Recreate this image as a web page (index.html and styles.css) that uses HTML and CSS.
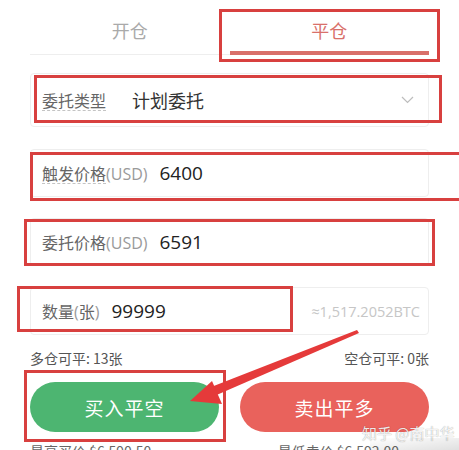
FILE: index.html
```html
<!DOCTYPE html>
<html lang="zh">
<head>
<meta charset="utf-8">
<link rel="stylesheet" href="styles.css">
</head>
<body>
<div class="page">
  <div class="tabs">
    <div class="tab">开仓</div>
    <div class="tab active">平仓</div>
  </div>

  <div class="field select">
    <span class="label dashed">委托类型</span>
    <span class="value sel-value">计划委托</span>
    <svg class="chevron" width="13" height="8" viewBox="0 0 13 8"><polyline points="1,1 6.5,6.5 12,1" fill="none" stroke="#bdbdbd" stroke-width="1.2"/></svg>
  </div>

  <div class="field input first">
    <span class="label"><span class="dashed">触发价格</span><span class="unit">(USD)</span></span>
    <span class="value">6400</span>
  </div>

  <div class="field input">
    <span class="label">委托价格<span class="unit">(USD)</span></span>
    <span class="value">6591</span>
  </div>

  <div class="field input">
    <span class="label">数量<span class="unit">(</span>张<span class="unit">)</span></span>
    <span class="value">99999</span>
    <span class="approx">≈1,517.2052BTC</span>
  </div>

  <div class="status">
    <span>多仓可平: 13张</span>
    <span>空仓可平: 0张</span>
  </div>

  <div class="buttons">
    <div class="btn buy">买入平空</div>
    <div class="btn sell">卖出平多</div>
  </div>

  <div class="bottom">
    <span>最高买价 $6,590.50</span>
    <span>最低卖价 $6,592.00</span>
  </div>
</div>

<div class="mark m-tab"></div>
<div class="mark m-select"></div>
<div class="mark m-trigger"></div>
<div class="mark m-entrust"></div>
<div class="mark m-qty"></div>
<div class="mark m-buy"></div>

<svg class="arrow" width="459" height="450" viewBox="0 0 459 450">
  <polygon points="357,330 359,333 212,397 206,389" fill="#e53a3a"/>
  <polygon points="190,401 212,381 222,404" fill="#e53a3a"/>
</svg>

<div class="watermark">知乎 @南中华</div>
<div class="shade"></div>
</body>
</html>
```

FILE: styles.css
```css
html, body {
  margin: 0;
  padding: 0;
  background: #fff;
  width: 459px;
  height: 450px;
  overflow: hidden;
}
body {
  position: relative;
  font-family: "Open Sans", "Noto Sans CJK SC", sans-serif;
  color: #333;
}
.page {
  width: 399px;
  padding: 0 0 0 30px;
}
.tabs {
  display: flex;
  height: 54px;
  border-bottom: 1px solid #eeeeee;
}
.tab {
  position: relative;
  flex: 1;
  display: flex;
  align-items: center;
  justify-content: center;
  padding-top: 6px;
  font-family: "Noto Sans CJK SC", sans-serif;
  font-size: 18px;
  color: #aaaaaa;
}
.tab.active {
  color: #d9706a;
}
.tab.active::after {
  content: "";
  position: absolute;
  left: 0;
  right: 0;
  bottom: -1px;
  height: 4px;
  background: #d9706a;
}
.field {
  display: flex;
  align-items: center;
  border: 1px solid #eeeeee;
  border-radius: 4px;
  padding: 0 8px 0 11px;
  box-sizing: border-box;
}
.select {
  margin-top: 18px;
  height: 54px;
}
.input {
  height: 48px;
  margin-top: 21px;
}
.input.first {
  margin-top: 22px;
}
.label {
  font-family: "Noto Sans CJK SC", sans-serif;
  font-size: 16px;
  color: #666;
  margin-right: 12px;
  white-space: nowrap;
}
.dashed {
  border-bottom: 1px dashed #c4c4c4;
  line-height: 20px;
  display: inline-block;
}
.unit {
  font-family: "Open Sans", sans-serif;
  font-size: 16px;
  color: #9a9a9a;
}
.value {
  font-family: "Open Sans", "Noto Sans CJK SC", sans-serif;
  font-size: 19px;
  color: #222;
  flex: 1;
}
.sel-value {
  font-family: "Noto Sans CJK SC", sans-serif;
  font-size: 18px;
  margin-left: 14px;
  color: #333;
}
.chevron {
  margin-right: 6px;
}
.approx {
  font-size: 14.5px;
  color: #c6c6c6;
}
.status {
  display: flex;
  justify-content: space-between;
  margin-top: 13px;
  height: 20px;
  align-items: center;
  font-family: "Noto Sans CJK SC", sans-serif;
  font-size: 14px;
  color: #555;
}
.buttons {
  display: flex;
  gap: 21px;
  margin-top: 14px;
}
.btn {
  flex: 1;
  height: 50px;
  border-radius: 25px;
  display: flex;
  align-items: center;
  justify-content: center;
  font-family: "Noto Sans CJK SC", sans-serif;
  font-size: 19px;
  letter-spacing: 1px;
  color: #fff;
}
.buy {
  background: #4db571;
}
.sell {
  background: #e9625c;
}
.bottom {
  display: flex;
  justify-content: space-between;
  margin-top: 9px;
  padding-right: 30px;
  font-family: "Noto Sans CJK SC", sans-serif;
  font-size: 14px;
  color: #666;
}
.mark {
  position: absolute;
  border: 3px solid #d8403f;
  box-sizing: border-box;
}
.m-tab { left: 219px; top: 9px; width: 221px; height: 53px; }
.m-select { left: 34px; top: 75px; width: 408px; height: 48px; }
.m-trigger { left: 30px; top: 152px; width: 432px; height: 49px; }
.m-entrust { left: 24px; top: 219px; width: 411px; height: 47px; }
.m-qty { left: 17px; top: 286px; width: 276px; height: 46px; }
.m-buy { left: 24px; top: 370px; width: 202px; height: 72px; }
.arrow {
  position: absolute;
  left: 0;
  top: 0;
}
.watermark {
  position: absolute;
  left: 362px;
  top: 422px;
  font-family: "Noto Sans CJK SC", sans-serif;
  font-size: 15px;
  color: rgba(255, 255, 255, 0.9);
  text-shadow: 0 0 1px rgba(0, 0, 0, 0.45);
}
.shade {
  position: absolute;
  left: 370px;
  top: 438px;
  width: 89px;
  height: 12px;
  background: linear-gradient(to bottom right, rgba(0,0,0,0) 0%, rgba(0,0,0,0.12) 100%);
}
```
